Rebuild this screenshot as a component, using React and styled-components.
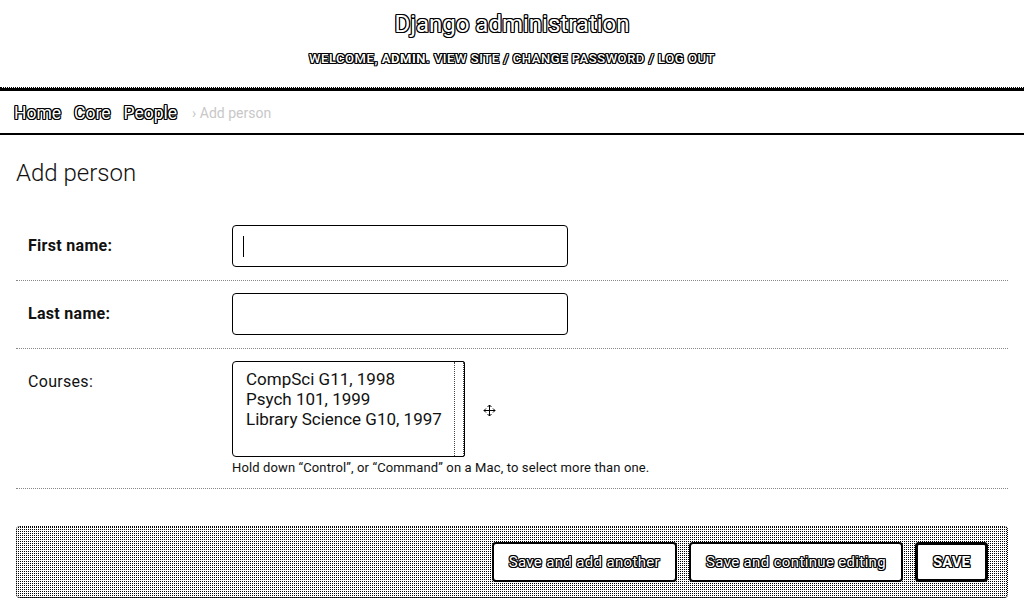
import React from 'react';
import styled, {createGlobalStyle, css} from 'styled-components';

const GlobalStyle = createGlobalStyle`
  html, body {
    margin: 0;
    padding: 0;
    background: #fff;
    font-family: Roboto, "Liberation Sans", Arial, sans-serif;
    color: #111;
  }
`;

// edges-only look of the reference: white glyphs with a black rim
const outlined = css`
  color: #fff;
  text-shadow:
    -1px -1px 0 #000, 1px -1px 0 #000, -1px 1px 0 #000, 1px 1px 0 #000,
    0 1px 0 #000, 0 -1px 0 #000, 1px 0 0 #000, -1px 0 0 #000;
`;

const Header = styled.header({
  height: 87,
  display: 'flex',
  flexDirection: 'column',
  alignItems: 'center',
  borderBottom: '1px dotted #000',
});

const Branding = styled.h1`
  ${outlined};
  margin: 10px 0 0;
  font-size: 24px;
  font-weight: 400;
  line-height: 28px;
`;

const UserTools = styled.div`
  ${outlined};
  margin-top: 13px;
  font-size: 13px;
  font-weight: 500;
  line-height: 16px;
  letter-spacing: 0.55px;
  text-transform: uppercase;
  strong { font-weight: 700; }
`;

const Breadcrumbs = styled.nav`
  height: 40px;
  display: flex;
  align-items: center;
  gap: 13px;
  padding: 2px 14px 0;
  border-top: 3px solid #000;
  border-bottom: 2px solid #000;
  font-size: 17.5px;
`;

const Crumb = styled.a`
  ${outlined};
  text-decoration: none;
`;

const Current = styled.span({
  color: '#c8c8c8',
  fontSize: 14,
  marginLeft: 2,
});

const Content = styled.main({
  padding: '24px 16px 0',
});

const Title = styled.h1({
  margin: '0 0 25px',
  fontSize: 24,
  fontWeight: 300,
  lineHeight: '29px',
  color: '#111',
});

const Row = styled.div({
  display: 'flex',
  alignItems: 'flex-start',
  padding: '12px 12px 13px',
  borderBottom: '1px dotted #888',
});

const Label = styled.label`
  width: 204px;
  flex: none;
  padding-top: 12px;
  font-size: 16px;
  letter-spacing: 0.3px;
  line-height: 18px;
  font-weight: ${p => (p.required ? 700 : 400)};
  color: #111;
`;

const Field = styled.div({
  position: 'relative',
});

const TextInput = styled.input({
  boxSizing: 'border-box',
  width: 336,
  height: 42,
  padding: '0 10px',
  border: '1px solid #000',
  borderRadius: 4,
  background: '#fff',
  fontSize: 16,
  fontFamily: 'inherit',
  outline: 'none',
});

const Caret = styled.span({
  position: 'absolute',
  left: 11,
  top: 11,
  width: 1,
  height: 21,
  background: '#000',
});

const ListWrap = styled.div({
  display: 'flex',
  alignItems: 'center',
});

const ListBox = styled.div({
  boxSizing: 'border-box',
  width: 233,
  height: 96,
  display: 'flex',
  border: '1px solid #000',
  borderRadius: '4px 2px 2px 4px',
  background: '#fff',
});

const Options = styled.div({
  flex: 1,
  padding: '7px 0 0 13px',
});

const Option = styled.div({
  fontSize: 17,
  lineHeight: '20px',
  color: '#111',
  whiteSpace: 'nowrap',
});

const ScrollTrack = styled.div({
  width: 8,
  borderLeft: '1px dotted #444',
  borderRight: '1px dotted #444',
});

const MoveIcon = styled.svg({
  marginLeft: 18,
  marginTop: 2,
});

const Help = styled.div({
  marginTop: 4,
  fontSize: 13,
  letterSpacing: '0.12px',
  lineHeight: '14px',
  color: '#111',
});

const SubmitRow = styled.div({
  marginTop: 37,
  display: 'flex',
  justifyContent: 'flex-end',
  gap: 12,
  padding: '15px 19px 15px',
  border: '1px dotted #000',
  borderRadius: 4,
  backgroundColor: '#fff',
  backgroundImage: 'conic-gradient(#000 0 25%, #fff 0)',
  backgroundSize: '2px 2px',
});

const Button = styled.button`
  ${outlined};
  height: 40px;
  padding: 0 15px;
  border: ${p => (p.primary ? '3px' : '2px')} solid #000;
  border-radius: 4px;
  background: #fff;
  font-family: inherit;
  font-size: 15px;
  letter-spacing: ${p => (p.primary ? '0' : '0.35px')};
  font-weight: ${p => (p.primary ? 700 : 400)};
  text-transform: ${p => (p.primary ? 'uppercase' : 'none')};
  cursor: pointer;
`;

const courses = ['CompSci G11, 1998', 'Psych 101, 1999', 'Library Science G10, 1997'];

export default function App() {
  return (
    <>
      <GlobalStyle />
      <Header>
        <Branding>Django administration</Branding>
        <UserTools>
          Welcome, <strong>admin</strong>. View site / Change password / Log out
        </UserTools>
      </Header>
      <Breadcrumbs>
        <Crumb href="#">Home</Crumb>
        <Crumb href="#">Core</Crumb>
        <Crumb href="#">People</Crumb>
        <Current>› Add person</Current>
      </Breadcrumbs>
      <Content>
        <Title>Add person</Title>
        <form>
          <Row>
            <Label required>First name:</Label>
            <Field>
              <TextInput type="text" />
              <Caret />
            </Field>
          </Row>
          <Row>
            <Label required>Last name:</Label>
            <Field>
              <TextInput type="text" />
            </Field>
          </Row>
          <Row>
            <Label>Courses:</Label>
            <Field>
              <ListWrap>
                <ListBox role="listbox" aria-multiselectable="true">
                  <Options>
                    {courses.map(c => (
                      <Option key={c} role="option">{c}</Option>
                    ))}
                  </Options>
                  <ScrollTrack />
                </ListBox>
                <MoveIcon width="13" height="13" viewBox="0 0 13 13">
                  <g fill="none" stroke="#000" strokeWidth="1">
                    <path d="M6.5 1v11M1 6.5h11" />
                    <path d="M4.5 3L6.5 1l2 2M4.5 10l2 2 2-2M3 4.5L1 6.5l2 2M10 4.5l2 2-2 2" />
                  </g>
                </MoveIcon>
              </ListWrap>
              <Help>Hold down “Control”, or “Command” on a Mac, to select more than one.</Help>
            </Field>
          </Row>
          <SubmitRow>
            <Button type="button">Save and add another</Button>
            <Button type="button">Save and continue editing</Button>
            <Button type="submit" primary>Save</Button>
          </SubmitRow>
        </form>
      </Content>
    </>
  );
}
